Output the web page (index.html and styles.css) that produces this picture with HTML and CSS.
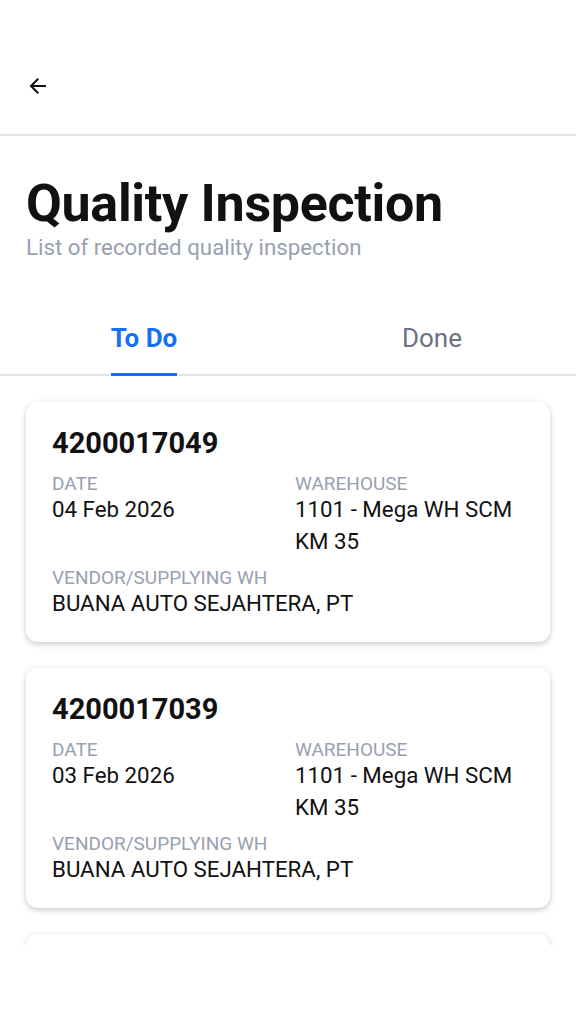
FILE: index.html
```html
<!DOCTYPE html>
<html lang="en">
<head>
    <meta charset="UTF-8">
    <meta name="viewport" content="width=device-width, initial-scale=1.0">
    <title>Quality Inspection</title>
    <link rel="stylesheet" href="styles.css">
</head>
<body>
    <div class="screen">
        <!-- Top bar -->
        <div class="topbar">
            <button class="back-btn" aria-label="Back">
                <svg width="24" height="24" viewBox="0 0 24 24" fill="none" stroke="#111" stroke-width="2" stroke-linecap="square">
                    <path d="M19 12H5.5"/>
                    <path d="M11.5 5.5L5 12l6.5 6.5"/>
                </svg>
            </button>
        </div>

        <!-- Heading -->
        <div class="heading">
            <h1>Quality Inspection</h1>
            <p class="subtitle">List of recorded quality inspection</p>
        </div>

        <!-- Tabs -->
        <div class="tabs">
            <div class="tab active"><span>To Do</span></div>
            <div class="tab"><span>Done</span></div>
        </div>

        <!-- List -->
        <div class="list">
            <div class="card">
                <div class="card-number">4200017049</div>
                <div class="card-grid">
                    <div class="field">
                        <div class="label">DATE</div>
                        <div class="value">04 Feb 2026</div>
                    </div>
                    <div class="field">
                        <div class="label">WAREHOUSE</div>
                        <div class="value">1101 - Mega WH SCM KM 35</div>
                    </div>
                    <div class="field wide">
                        <div class="label">VENDOR/SUPPLYING WH</div>
                        <div class="value">BUANA AUTO SEJAHTERA, PT</div>
                    </div>
                </div>
            </div>

            <div class="card">
                <div class="card-number">4200017039</div>
                <div class="card-grid">
                    <div class="field">
                        <div class="label">DATE</div>
                        <div class="value">03 Feb 2026</div>
                    </div>
                    <div class="field">
                        <div class="label">WAREHOUSE</div>
                        <div class="value">1101 - Mega WH SCM KM 35</div>
                    </div>
                    <div class="field wide">
                        <div class="label">VENDOR/SUPPLYING WH</div>
                        <div class="value">BUANA AUTO SEJAHTERA, PT</div>
                    </div>
                </div>
            </div>

            <!-- next card, scrolled below the fold -->
            <div class="card card-empty"></div>
        </div>
    </div>
</body>
</html>
```

FILE: styles.css
```css
body {
    margin: 0;
    padding: 0;
    background-color: #fff;
    font-family: Roboto, "Liberation Sans", sans-serif;
    color: #111;
}
.screen {
    width: 576px;
    height: 1024px;
    background: #fff;
}
.topbar {
    height: 136px;
    border-bottom: 2px solid #e4e4e4;
    display: flex;
    align-items: flex-start;
    padding: 74px 0 0 26px;
    box-sizing: border-box;
}
.back-btn {
    width: 24px;
    height: 24px;
    padding: 0;
    border: none;
    background: none;
    cursor: pointer;
}
.heading {
    padding: 38px 26px 0;
}
.heading h1 {
    margin: 0;
    font-size: 52px;
    font-weight: 700;
    line-height: 60px;
    letter-spacing: -0.3px;
}
.subtitle {
    margin: 0;
    font-size: 22.3px;
    line-height: 26px;
    color: #98a1b0;
}
.tabs {
    display: grid;
    grid-template-columns: 1fr 1fr;
    margin-top: 55px;
    border-bottom: 2px solid #e4e4e4;
}
.tab {
    display: flex;
    justify-content: center;
    font-size: 26px;
    line-height: 30px;
    color: #6b7280;
}
.tab span {
    padding: 8px 0 20px;
    border-bottom: 3px solid transparent;
    margin-bottom: -2px;
}
.tab.active {
    color: #1570f6;
    font-weight: 700;
}
.tab.active span {
    border-bottom-color: #1570f6;
}
.list {
    height: 569px;
    overflow: hidden;
    padding: 26px 26px 0;
    box-sizing: border-box;
    display: flex;
    flex-direction: column;
    gap: 26px;
}
.card {
    flex-shrink: 0;
    background: #fff;
    border-radius: 12px;
    box-shadow: 0 2px 6px rgba(0, 0, 0, 0.22);
    padding: 26px 26px 23px;
}
.card-empty {
    height: 190px;
}
.card-number {
    font-size: 29px;
    font-weight: 700;
    line-height: 30px;
    margin-bottom: 17px;
}
.card-grid {
    display: grid;
    grid-template-columns: 1fr 1fr;
    column-gap: 14px;
    row-gap: 12px;
}
.field.wide {
    grid-column: 1 / -1;
}
.label {
    font-size: 19px;
    line-height: 18px;
    color: #98a1b0;
}
.value {
    font-size: 22.3px;
    line-height: 32px;
    color: #111;
}
```
